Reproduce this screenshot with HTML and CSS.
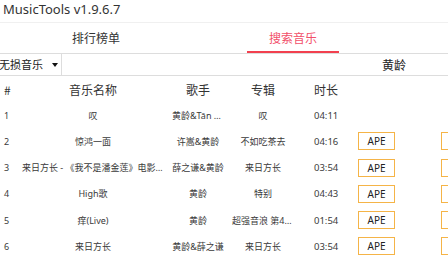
FILE: index.html
```html
<!DOCTYPE html>
<html>
<head>
<meta charset="utf-8">
<link rel="stylesheet" href="styles.css">
</head>
<body>
<div class="app">
  <div class="title">MusicTools v1.9.6.7</div>
  <div class="tabs">
    <div class="tab tab-first">排行榜单</div>
    <div class="tab tab-active">搜索音乐</div>
  </div>
  <div class="toolbar">
    <div class="select">无损音乐<span class="arrow"></span></div>
    <div class="keyword">黄龄</div>
  </div>
  <div class="table">
    <div class="row head">
      <div class="c-idx">#</div>
      <div class="c-name">音乐名称</div>
      <div class="c-singer">歌手</div>
      <div class="c-album">专辑</div>
      <div class="c-time">时长</div>
      <div class="c-ops"></div>
    </div>
    <div class="row">
      <div class="c-idx">1</div>
      <div class="c-name">叹</div>
      <div class="c-singer">黄龄&amp;Tān Tān</div>
      <div class="c-album">叹</div>
      <div class="c-time">04:11</div>
      <div class="c-ops"></div>
    </div>
    <div class="row">
      <div class="c-idx">2</div>
      <div class="c-name">惊鸿一面</div>
      <div class="c-singer">许嵩&amp;黄龄</div>
      <div class="c-album">不如吃茶去</div>
      <div class="c-time">04:16</div>
      <div class="c-ops"><span class="btn">APE</span><span class="btn">FLAC</span></div>
    </div>
    <div class="row">
      <div class="c-idx">3</div>
      <div class="c-name">来日方长 - 《我不是潘金莲》电影主题曲</div>
      <div class="c-singer">薛之谦&amp;黄龄</div>
      <div class="c-album">来日方长</div>
      <div class="c-time">03:54</div>
      <div class="c-ops"><span class="btn">APE</span><span class="btn">FLAC</span></div>
    </div>
    <div class="row">
      <div class="c-idx">4</div>
      <div class="c-name">High歌</div>
      <div class="c-singer">黄龄</div>
      <div class="c-album">特别</div>
      <div class="c-time">04:43</div>
      <div class="c-ops"><span class="btn">APE</span><span class="btn">FLAC</span></div>
    </div>
    <div class="row">
      <div class="c-idx">5</div>
      <div class="c-name">痒(Live)</div>
      <div class="c-singer">黄龄</div>
      <div class="c-album">超强音浪 第4期 Live</div>
      <div class="c-time">01:54</div>
      <div class="c-ops"><span class="btn">APE</span><span class="btn">FLAC</span></div>
    </div>
    <div class="row">
      <div class="c-idx">6</div>
      <div class="c-name">来日方长</div>
      <div class="c-singer">黄龄&amp;薛之谦</div>
      <div class="c-album">来日方长</div>
      <div class="c-time">03:54</div>
      <div class="c-ops"><span class="btn">APE</span><span class="btn">FLAC</span></div>
    </div>
  </div>
</div>
</body>
</html>
```
FILE: styles.css
```css
html, body {
  margin: 0;
  padding: 0;
  background: #fff;
  overflow: hidden;
}
.app {
  width: 448px;
  height: 255px;
  overflow: hidden;
  font-family: "Noto Sans", "Noto Sans CJK SC", sans-serif;
  color: #333;
}
.title {
  height: 23px;
  line-height: 19px;
  padding-left: 3px;
  font-size: 13px;
  color: #333;
  border-bottom: 1px solid #f0f0f0;
  box-sizing: border-box;
}
.tabs {
  display: flex;
  height: 31px;
  border-bottom: 1px solid #ddd;
  box-sizing: border-box;
}
.tab {
  font-family: "Noto Sans CJK SC", sans-serif;
  font-size: 12px;
  line-height: 30px;
  text-align: center;
  color: #333;
  position: relative;
}
.tab-first { width: 192px; }
.tab-active {
  width: 202px;
  color: #f2506a;
}
.tab-active::after {
  content: "";
  position: absolute;
  left: 55px;
  width: 92px;
  bottom: 0;
  height: 2px;
  background: #f2404f;
}
.toolbar {
  display: flex;
  height: 22px;
  border-bottom: 1px solid #ddd;
  box-sizing: border-box;
  align-items: center;
}
.select {
  width: 62px;
  height: 100%;
  border-right: 1px solid #ddd;
  font-family: "Noto Sans CJK SC", sans-serif;
  font-size: 11px;
  line-height: 21px;
  display: flex;
  align-items: center;
  margin-left: -1px;
  color: #222;
}
.arrow {
  width: 0;
  height: 0;
  border-left: 3px solid transparent;
  border-right: 3px solid transparent;
  border-top: 4px solid #111;
  margin-left: 9px;
}
.keyword {
  margin-left: 320px;
  font-family: "Noto Sans CJK SC", sans-serif;
  font-size: 12px;
  color: #222;
}
.table {
  font-family: "Noto Sans", "Noto Sans CJK SC", sans-serif;
}
.row {
  display: grid;
  grid-template-columns: 18px 150px 60px 70px 52px 1fr;
  height: 26.2px;
  align-items: center;
  font-size: 9px;
  color: #3a3a3a;
}
.row.head {
  font-size: 12px;
  font-family: "Noto Sans CJK SC", sans-serif;
  color: #333;
}
.row > div {
  white-space: nowrap;
  overflow: hidden;
  text-overflow: ellipsis;
}
.c-idx { padding-left: 4px; }
.c-name, .c-singer, .c-album { text-align: center; padding: 0 4px; }
.c-time { padding-left: 16px; font-size: 9.5px; }
.row.head .c-time { font-size: 12px; }
.row > .c-ops {
  display: flex;
  gap: 46px;
  padding-left: 8px;
  overflow: visible;
}
.btn {
  flex: none;
  width: 37px;
  height: 18px;
  box-sizing: border-box;
  border: 1px solid #f5b447;
  font-size: 10px;
  line-height: 16px;
  text-align: center;
  color: #222;
}
```
